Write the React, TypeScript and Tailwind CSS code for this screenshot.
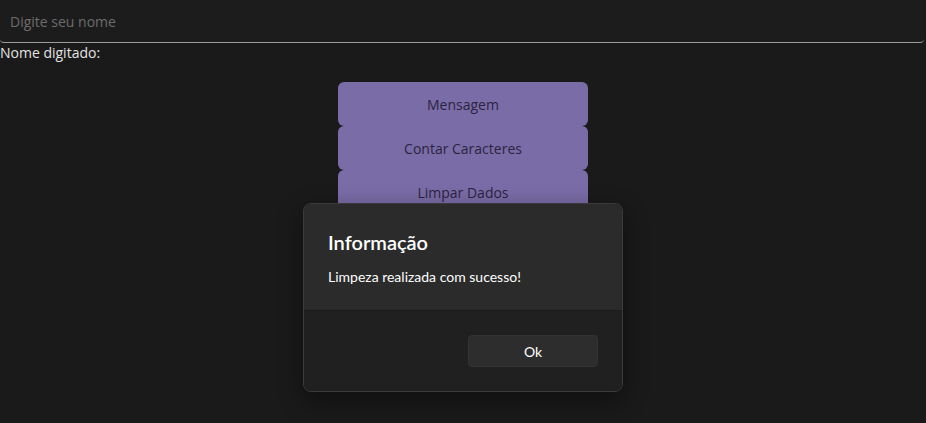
import React, { useState } from 'react';

const botoes = ['Mensagem', 'Contar Caracteres', 'Limpar Dados'];

export default function App() {
  const [nome, setNome] = useState('');
  const [aberto, setAberto] = useState(true);

  return (
    <div className="relative min-h-[423px] bg-[#1a1a1a] text-[#e4e4e4] font-['Open_Sans',sans-serif] text-[14px]">
      <input
        value={nome}
        onChange={(e) => setNome(e.target.value)}
        placeholder="Digite seu nome"
        className="block w-[924px] h-[43px] px-[10px] bg-[#1c1c1c] rounded-[4px] border-b border-[#9c9c9c] text-[14px] text-[#e4e4e4] placeholder:text-[#6c6c6c] outline-none"
      />
      <div className="leading-[20px]">Nome digitado: {nome}</div>

      <div className="flex flex-col items-center mt-[19px]">
        {botoes.map((b) => (
          <button
            key={b}
            className="w-[250px] h-[44px] rounded-[6px] bg-[#7a6ca7] text-[#2a2440] text-[14px]"
          >
            {b}
          </button>
        ))}
      </div>

      {aberto && (
        <div className="absolute left-[303px] top-[203px] w-[320px] rounded-[8px] border border-[#3b3b3b] overflow-hidden shadow-[0_8px_24px_rgba(0,0,0,0.45)] font-['Lato',sans-serif]">
          <div className="bg-[#2b2b2b] px-[24px] pt-[24px] pb-[23px]">
            <h2 className="text-[20px] leading-[28px] font-semibold text-white">Informação</h2>
            <p className="mt-[11px] text-[14px] leading-[20px] text-white">Limpeza realizada com sucesso!</p>
          </div>
          <div className="bg-[#202020] border-t border-[#1c1c1c] flex justify-end px-[24px] py-[24px]">
            <button
              onClick={() => setAberto(false)}
              className="w-[130px] h-[32px] rounded-[4px] bg-[#2d2d2d] border border-[#333333] text-white text-[14px]"
            >
              Ok
            </button>
          </div>
        </div>
      )}
    </div>
  );
}
